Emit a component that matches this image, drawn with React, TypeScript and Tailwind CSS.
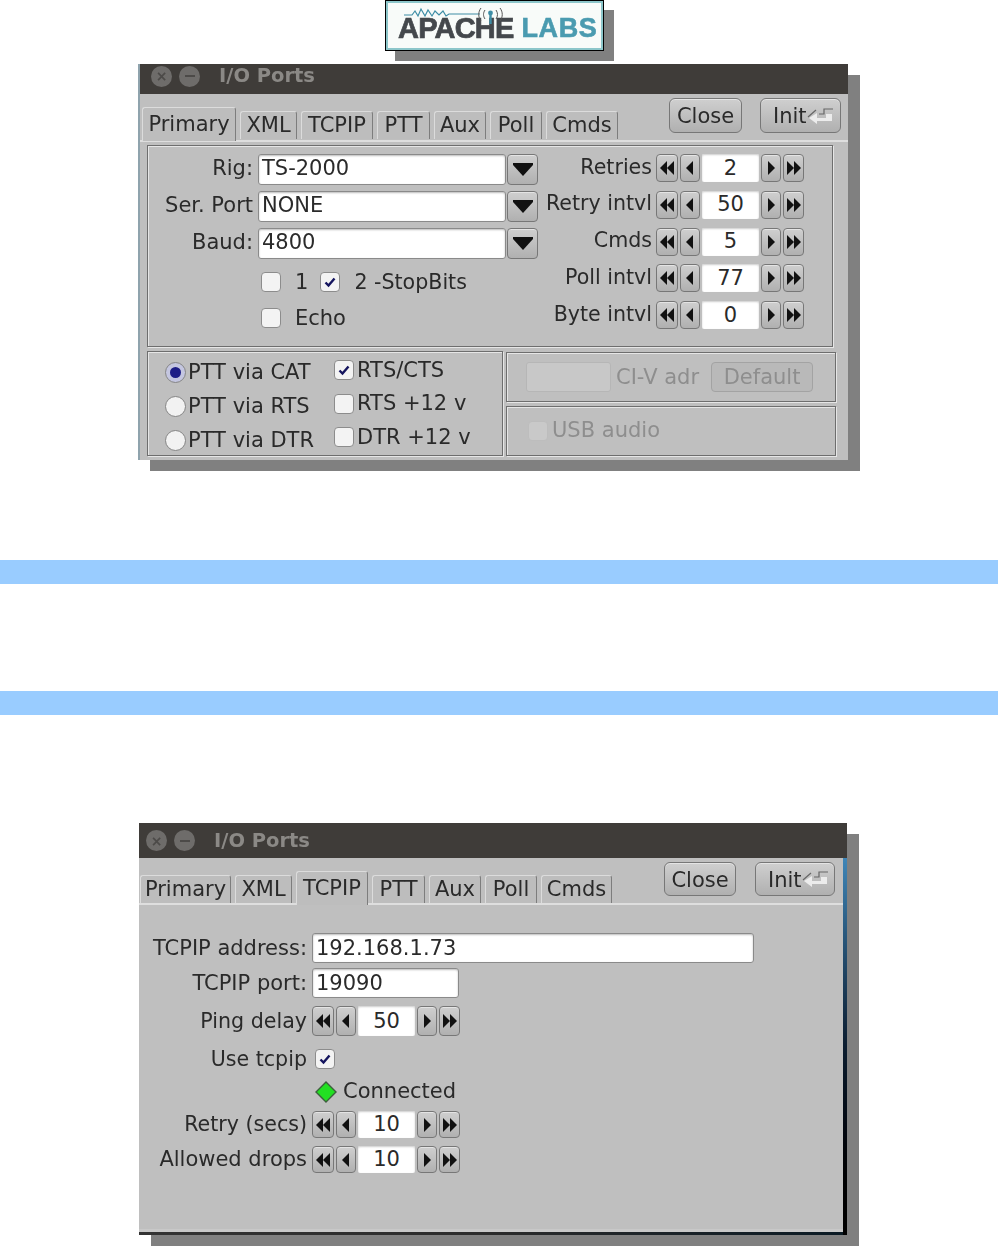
const raised =
  'bg-gradient-to-b from-[#cfcfcf] to-[#b0b0b0] border border-[#777] rounded-[4px] shadow-[inset_0_1px_0_#e4e4e4]'
const engraved = 'border border-[#6e6e6e] shadow-[inset_1px_1px_0_#e6e6e6,1px_1px_0_#e6e6e6]'
const field = 'bg-white border border-[#8a8a8a] rounded-[3px] shadow-[inset_0_1px_2px_#bbb]'

function Logo() {
  return (
    <div className="relative ml-[385px] w-[219px] h-[51px] shrink-0 border border-black bg-[#8cc6ca] p-[2px] shadow-[10px_10px_0_#808080] blur-[0.4px]">
      <div className="relative flex h-full items-end gap-[8px] pl-[10px] bg-[#f8fbf9] pb-[8px] font-['Liberation_Sans',sans-serif] font-bold text-[29px] leading-[23px]">
        <svg className="absolute left-[14px] top-[1px]" width="112" height="20" viewBox="0 0 112 20" fill="none">
          <path
            d="M2 11H10L13 7L16 12L19 5L23 12L26 6L30 12L33 7L37 11L41 7L44 12L47 10H78"
            stroke="#3e8ea6"
            strokeWidth="1.2"
          />
          <path d="M83 6C81 9 81 12 83 15M79 4C76 8 76 13 79 17" stroke="#555" strokeWidth="1" />
          <path d="M94 6C96 9 96 12 94 15M98 4C101 8 101 13 98 17" stroke="#555" strokeWidth="1" />
          <circle cx="88.5" cy="9" r="2.4" fill="#3e8ea6" />
          <path d="M88.5 10V20" stroke="#3e8ea6" strokeWidth="2.4" />
        </svg>
        <span className="text-[#44484c] tracking-[-0.8px] [-webkit-text-stroke:0.7px_#44484c]">APACHE</span>
        <span className="text-[#4a9bb0] tracking-[0.6px] text-[27px] [-webkit-text-stroke:0.6px_#4a9bb0]">LABS</span>
      </div>
    </div>
  )
}

function TitleBar({ h, left }: { h: string; left: string }) {
  return (
    <div className={`flex items-center bg-[#3f3c39] ${h} ${left}`}>
      <div className="w-[21px] h-[21px] rounded-full bg-[#6e6c6a] flex items-center justify-center text-[#4c4a48] text-[14px] font-bold leading-none">
        ×
      </div>
      <div className="ml-[7px] w-[21px] h-[21px] rounded-full bg-[#6e6c6a] flex items-center justify-center">
        <div className="w-[10px] h-[2px] bg-[#4c4a48]" />
      </div>
      <span className="ml-[19px] text-[#8b8986] font-bold text-[19.5px] leading-none">I/O Ports</span>
    </div>
  )
}

function Tab({ label, w, active }: { label: string; w: string; active?: boolean }) {
  return (
    <div
      className={`${w} flex items-center justify-center bg-[#bdbdbd] rounded-t-[3px] border-t border-l border-t-[#dcdcdc] border-l-[#dcdcdc] border-r border-r-[#7d7d7d] ${
        active ? 'h-[34px]' : 'h-[28px] mb-[2px]'
      }`}
    >
      {label}
    </div>
  )
}

function InitGlyph() {
  return (
    <svg width="27" height="20" viewBox="0 0 27 20" fill="none">
      <path d="M1 11L9 4M12 8H17V3H26" stroke="#666" strokeWidth="1.2" />
      <path d="M2 12L10 18V15H25V8H19V12H10V7Z" fill="#ececec" />
    </svg>
  )
}

function Button({ children, w, h }: { children: React.ReactNode; w: string; h: string }) {
  return <div className={`${raised} ${w} ${h} flex items-center justify-center pt-[2px] rounded-[6px]`}>{children}</div>
}

function InitButton({ w, h }: { w: string; h: string }) {
  return (
    <div className={`${raised} ${w} ${h} flex items-center pl-[12px] rounded-[6px]`}>
      <span className="pt-[2px]">Init</span>
      <InitGlyph />
    </div>
  )
}

function Arrow({ kind }: { kind: 'll' | 'l' | 'r' | 'rr' }) {
  const pts: Record<string, string[]> = {
    ll: ['1,8 8,1 8,15', '8,8 15,1 15,15'],
    l: ['4,8 11,1 11,15'],
    r: ['5,1 12,8 5,15'],
    rr: ['1,1 8,8 1,15', '8,1 15,8 8,15'],
  }
  return (
    <svg width="16" height="16" viewBox="0 0 16 16" fill="#111">
      {pts[kind].map((p) => (
        <polygon key={p} points={p} />
      ))}
    </svg>
  )
}

function SpinBtn({ kind, w }: { kind: 'll' | 'l' | 'r' | 'rr'; w: string }) {
  return (
    <div className={`${raised} ${w} h-full flex items-center justify-center`}>
      <Arrow kind={kind} />
    </div>
  )
}

function Spinner({ value, h }: { value: string; h: string }) {
  return (
    <div className={`flex ${h} gap-[2px] w-[148px]`}>
      <SpinBtn kind="ll" w="w-[22px]" />
      <SpinBtn kind="l" w="w-[20px]" />
      <div className="w-[57px] h-full bg-white rounded-[2px] flex items-center justify-center shadow-[inset_0_1px_2px_#ccc]">
        {value}
      </div>
      <SpinBtn kind="r" w="w-[20px]" />
      <SpinBtn kind="rr" w="w-[21px]" />
    </div>
  )
}

function Check({ on, disabled }: { on?: boolean; disabled?: boolean }) {
  return (
    <div
      className={`w-[20px] h-[20px] shrink-0 rounded-[4px] border flex items-center justify-center ${
        disabled ? 'bg-[#c9c9c9] border-[#bdbdbd]' : 'bg-[#f3f3f3] border-[#8c8c8c]'
      }`}
    >
      {on && (
        <svg width="14" height="14" viewBox="0 0 14 14" fill="none">
          <path d="M2.5 7.5L5.5 10.5L11.5 3.5" stroke="#14145e" strokeWidth="2.4" />
        </svg>
      )}
    </div>
  )
}

function Radio({ on }: { on?: boolean }) {
  return (
    <div className={`w-[21px] h-[21px] shrink-0 rounded-full border flex items-center justify-center border-[#858585] ${on ? 'bg-[#c4c6e0]' : 'bg-[#f2f2f2]'}`}>
      {on && <div className="w-[11px] h-[11px] rounded-full bg-[#1d1d86]" />}
    </div>
  )
}

function Combo({ label, value }: { label: string; value: string }) {
  return (
    <div className="flex items-center h-[31px]">
      <div className="w-[105px] text-right pb-[2px] whitespace-nowrap">{label}</div>
      <div className={`${field} ml-[5px] w-[248px] h-full flex items-center pl-[3px] pb-[2px]`}>{value}</div>
      <div className={`${raised} ml-[1px] w-[31px] h-full flex flex-col items-center justify-center`}>
        <div className="w-[20px] h-[2px] bg-[#111]" />
        <svg width="20" height="11" viewBox="0 0 20 11" fill="#111">
          <polygon points="0,0 20,0 10,11" />
        </svg>
      </div>
    </div>
  )
}

function SpinRow({ label, value }: { label: string; value: string }) {
  return (
    <div className="flex items-center">
      <div className="w-[114px] text-right text-[20.6px] whitespace-nowrap pb-[2px]">{label}</div>
      <div className="ml-[4px]">
        <Spinner value={value} h="h-[28px]" />
      </div>
    </div>
  )
}

function Primary() {
  return (
    <div className="flex h-[202px] ml-[9px] mt-[3px] w-[686px] pt-[8px] border-[#6e6e6e] border shadow-[inset_1px_1px_0_#e6e6e6,1px_1px_0_#e6e6e6]">
      <div className="w-[390px]">
        <div className="flex flex-col gap-[6px]">
          <Combo label="Rig:" value="TS-2000" />
          <Combo label="Ser. Port" value="NONE" />
          <Combo label="Baud:" value="4800" />
        </div>
        <div className="flex items-center ml-[113px] mt-[13px] h-[20px]">
          <Check />
          <span className="ml-[14px]">1</span>
          <span className="ml-[12px]">
            <Check on />
          </span>
          <span className="ml-[14px] text-[20.6px]">2 -StopBits</span>
        </div>
        <div className="flex items-center ml-[113px] mt-[16px] h-[20px]">
          <Check />
          <span className="ml-[14px]">Echo</span>
        </div>
      </div>
      <div className="flex flex-col gap-[8.75px]">
        <SpinRow label="Retries" value="2" />
        <SpinRow label="Retry intvl" value="50" />
        <SpinRow label="Cmds" value="5" />
        <SpinRow label="Poll intvl" value="77" />
        <SpinRow label="Byte intvl" value="0" />
      </div>
    </div>
  )
}

function PttPanel() {
  return (
    <div className={`${engraved} w-[356px] h-[105px] flex pl-[17px] pt-[8px]`}>
      <div className="w-[169px] flex flex-col pt-[2px] gap-[13px]">
        {['PTT via CAT', 'PTT via RTS', 'PTT via DTR'].map((t, i) => (
          <div key={t} className="flex items-center h-[21px] gap-[2px] whitespace-nowrap">
            <Radio on={i === 0} />
            <span>{t}</span>
          </div>
        ))}
      </div>
      <div className="flex flex-col gap-[13.5px]">
        {['RTS/CTS', 'RTS +12 v', 'DTR +12 v'].map((t, i) => (
          <div key={t} className="flex items-center h-[20px] gap-[3px] whitespace-nowrap">
            <Check on={i === 0} />
            <span>{t}</span>
          </div>
        ))}
      </div>
    </div>
  )
}

function DisabledPanels() {
  return (
    <div className="ml-[3px] mt-[1px] w-[330px] flex flex-col gap-[4px] text-[#8e8e8e]">
      <div className={`${engraved} h-[50px] flex items-center pl-[19px]`}>
        <div className="w-[85px] h-[30px] bg-[#c8c8c8] rounded-[3px] border border-[#b6b6b6]" />
        <span className="ml-[5px]">CI-V adr</span>
        <div className="ml-[12px] w-[102px] h-[30px] flex items-center justify-center rounded-[4px] border border-[#a3a3a3] bg-[#b9b9b9]">
          Default
        </div>
      </div>
      <div className={`${engraved} h-[50px] flex items-center pl-[21px] gap-[4px]`}>
        <Check disabled />
        <span className="pb-[2px]">USB audio</span>
      </div>
    </div>
  )
}

function WindowOne() {
  return (
    <div className="ml-[138px] mt-[13px] w-[710px] h-[396px] shrink-0 bg-[#bfbfbf] border-l-2 border-l-[#8fa3ad] shadow-[12px_11px_0_#808080] blur-[0.4px]">
      <TitleBar h="h-[30px] pb-[6px]" left="pl-[11px]" />
      <div className="flex items-start h-[48px] pl-[2px] border-b-2 border-b-[#dedede]">
        <div className="flex items-end gap-[4px] mt-[13px] h-[34px] w-[477px]">
          <Tab label="Primary" w="w-[94px]" active />
          <Tab label="XML" w="w-[57px]" />
          <Tab label="TCPIP" w="w-[72px]" />
          <Tab label="PTT" w="w-[53px]" />
          <Tab label="Aux" w="w-[52px]" />
          <Tab label="Poll" w="w-[52px]" />
          <Tab label="Cmds" w="w-[72px]" />
        </div>
        <div className="flex mt-[4px] ml-[50px] gap-[18px]">
          <Button w="w-[73px]" h="h-[35px]">Close</Button>
          <InitButton w="w-[81px]" h="h-[35px]" />
        </div>
      </div>
      <div className="-ml-[2px]">
        <Primary />
        <div className="flex ml-[9px] mt-[4px]">
          <PttPanel />
          <DisabledPanels />
        </div>
      </div>
    </div>
  )
}

function FormRow({ label, children, h, mt, size }: { label: string; children: React.ReactNode; h: string; mt: string; size?: string }) {
  return (
    <div className={`flex items-center ${h} ${mt}`}>
      <div className={`w-[168px] text-right whitespace-nowrap ${size ?? ''}`}>{label}</div>
      <div className="ml-[5px] flex items-center">{children}</div>
    </div>
  )
}

function WindowTwo() {
  return (
    <div className="ml-[139px] mt-[108px] w-[708px] h-[412px] shrink-0 flex flex-col bg-[#bfbfbf] shadow-[12px_11px_0_#808080] blur-[0.4px]">
      <TitleBar h="h-[35px] shrink-0" left="pl-[7px]" />
      <div className="flex flex-1 min-h-0">
        <div className="flex-1 flex flex-col min-w-0">
          <div className="flex items-start h-[47px] pl-[1px] border-b-2 border-b-[#dedede]">
            <div className="flex items-end gap-[4px] mt-[11px] h-[36px] w-[473px]">
              <Tab label="Primary" w="w-[91px]" />
              <Tab label="XML" w="w-[57px]" />
              <Tab label="TCPIP" w="w-[72px]" active />
              <Tab label="PTT" w="w-[53px]" />
              <Tab label="Aux" w="w-[52px]" />
              <Tab label="Poll" w="w-[52px]" />
              <Tab label="Cmds" w="w-[71px]" />
            </div>
            <div className="flex mt-[4px] ml-[51px] gap-[19px]">
              <Button w="w-[72px]" h="h-[34px]">Close</Button>
              <InitButton w="w-[80px]" h="h-[34px]" />
            </div>
          </div>
          <FormRow label="TCPIP address:" h="h-[30px]" mt="mt-[28px]">
            <div className={`${field} w-[442px] h-[30px] flex items-center pl-[3px]`}>192.168.1.73</div>
          </FormRow>
          <FormRow label="TCPIP port:" h="h-[30px]" mt="mt-[5px]">
            <div className={`${field} w-[147px] h-[30px] flex items-center pl-[3px]`}>19090</div>
          </FormRow>
          <FormRow label="Ping delay" h="h-[30px]" mt="mt-[8px]" size="text-[20.6px]">
            <Spinner value="50" h="h-[30px]" />
          </FormRow>
          <FormRow label="Use tcpip" h="h-[20px]" mt="mt-[13px]" size="text-[20.6px]">
            <div className="ml-[3px]">
              <Check on />
            </div>
          </FormRow>
          <FormRow label="" h="h-[22px]" mt="mt-[12px]">
            <svg className="ml-[3px]" width="22" height="22" viewBox="0 0 22 22">
              <polygon points="11,1 21,11 11,21 1,11" fill="#22e022" stroke="#3d5f3d" strokeWidth="1.4" />
            </svg>
            <span className="ml-[6px] pb-[2px]">Connected</span>
          </FormRow>
          <FormRow label="Retry (secs)" h="h-[27px]" mt="mt-[8px]" size="text-[20.6px]">
            <Spinner value="10" h="h-[27px]" />
          </FormRow>
          <FormRow label="Allowed drops" h="h-[27px]" mt="mt-[8px]">
            <Spinner value="10" h="h-[27px]" />
          </FormRow>
          <div className="mt-auto h-[3px] bg-[#c8c8c8]" />
          <div className="h-[3px] bg-gradient-to-r from-[#333] via-[#2b2b2b] to-[#0a1a24]" />
        </div>
        <div className="w-[4px] bg-gradient-to-b from-[#3f86b8] via-[#0c1d30] to-black" />
      </div>
    </div>
  )
}

export default function App() {
  return (
    <div className="flex flex-col h-[1246px] overflow-hidden bg-white font-['DejaVu_Sans',sans-serif] text-[21px] leading-none text-[#2a2a2a]">
      <Logo />
      <WindowOne />
      <div className="mt-[100px] h-[24px] shrink-0 bg-[#99ccff]" />
      <div className="mt-[107px] h-[24px] shrink-0 bg-[#99ccff]" />
      <WindowTwo />
    </div>
  )
}
